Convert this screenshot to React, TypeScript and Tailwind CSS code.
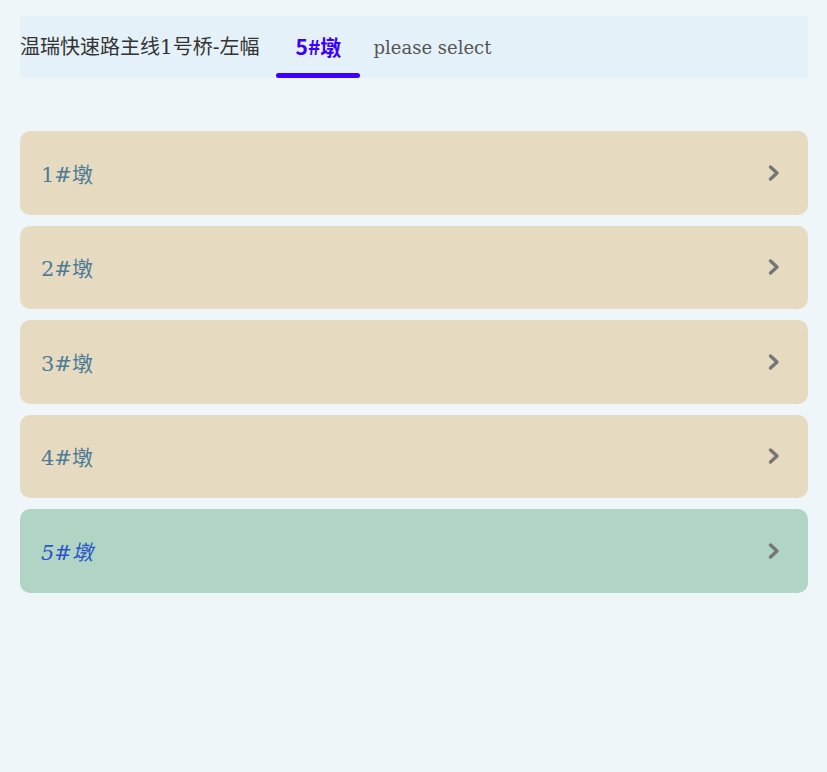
import React, { useState } from 'react';

const PIERS = ['1#墩', '2#墩', '3#墩', '4#墩', '5#墩'];

function Chevron() {
  return (
    <svg width="14" height="18" viewBox="0 0 14 18" className="shrink-0">
      <path d="M3.5 3 L10 9 L3.5 15" fill="none" stroke="#767676" strokeWidth="3.4" strokeLinecap="round" strokeLinejoin="round" />
    </svg>
  );
}

export default function App() {
  const [selected, setSelected] = useState('5#墩');

  return (
    <div
      className="min-h-[772px] w-full bg-[#eff6f9] pl-5 pr-[19px] pt-4"
      style={{ fontFamily: '"DejaVu Serif", "Noto Sans CJK SC", serif' }}
    >
      {/* Breadcrumb tab bar */}
      <div className="flex h-[62px] items-stretch bg-[#e5f1f8]">
        <div className="flex items-center text-[20px] text-[#333]">温瑞快速路主线1号桥-左幅</div>
        <div className="relative ml-[17px] flex w-[84px] items-center justify-center">
          <span className="text-[21px] font-bold text-[#3b00ff]" style={{ fontFamily: '"Noto Sans CJK SC", sans-serif' }}>{selected}</span>
          <div className="absolute bottom-0 left-0 right-0 h-[5px] rounded-full bg-[#3b00ff]" />
        </div>
        <div className="ml-[13px] flex items-center text-[18px] text-[#555]">please select</div>
      </div>

      {/* Pier list */}
      <div className="mt-[53px] flex flex-col gap-[11px]">
        {PIERS.map((p) => {
          const active = p === selected;
          return (
            <button
              key={p}
              onClick={() => setSelected(p)}
              className={`flex h-[83.5px] items-center justify-between rounded-[10px] pl-[21px] pr-[27px] text-left ${
                active ? 'bg-[#b0d5c5]' : 'bg-[#e6dbc0]'
              }`}
            >
              <span className={`pt-[5px] text-[21px] ${active ? 'italic text-[#2d55c8]' : 'text-[#4f7b98]'}`}>{p}</span>
              <Chevron />
            </button>
          );
        })}
      </div>
    </div>
  );
}
